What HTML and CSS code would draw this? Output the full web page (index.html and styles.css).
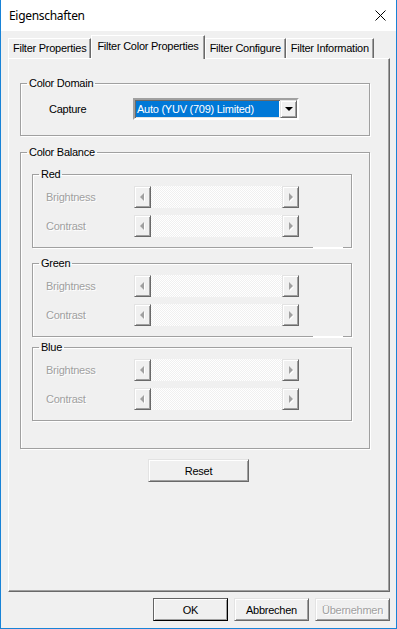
FILE: index.html
```html
<!DOCTYPE html>
<html lang="de">
<head>
    <meta charset="UTF-8">
    <meta name="viewport" content="width=device-width, initial-scale=1.0">
    <title>Eigenschaften</title>
    <link rel="stylesheet" href="styles.css">
</head>
<body>

    <div class="window">
        <div class="titlebar">
            <span class="title">Eigenschaften</span>
            <svg class="close" width="11" height="11" viewBox="0 0 11 11">
                <path d="M0.5 0.5 L10.5 10.5 M10.5 0.5 L0.5 10.5" stroke="#000" stroke-width="1" fill="none"/>
            </svg>
        </div>

        <div class="content">
            <div class="tabs">
                <div class="tab">Filter Properties</div>
                <div class="tab active">Filter Color Properties</div>
                <div class="tab">Filter Configure</div>
                <div class="tab">Filter Information</div>
            </div>

            <div class="panel">
                <fieldset class="group">
                    <legend>Color Domain</legend>
                    <div class="domain-body">
                        <div class="row">
                            <span class="label capture">Capture</span>
                            <div class="combo">
                                <span class="combo-value">Auto (YUV (709) Limited)</span>
                                <span class="combo-btn"><span class="down"></span></span>
                            </div>
                        </div>
                    </div>
                </fieldset>

                <fieldset class="group balance">
                    <legend>Color Balance</legend>
                    <div class="balance-body">
                        <fieldset class="group channel">
                            <legend>Red</legend>
                            <div class="channel-body">
                                <div class="row">
                                    <span class="label disabled">Brightness</span>
                                    <div class="scroll"><span class="arrow left"></span><span class="track"></span><span class="arrow right"></span></div>
                                </div>
                                <div class="row">
                                    <span class="label disabled">Contrast</span>
                                    <div class="scroll"><span class="arrow left"></span><span class="track"></span><span class="arrow right"></span></div>
                                </div>
                            </div>
                            <span class="line-gap"></span>
                        </fieldset>

                        <fieldset class="group channel green">
                            <legend>Green</legend>
                            <div class="channel-body">
                                <div class="row">
                                    <span class="label disabled">Brightness</span>
                                    <div class="scroll"><span class="arrow left"></span><span class="track"></span><span class="arrow right"></span></div>
                                </div>
                                <div class="row">
                                    <span class="label disabled">Contrast</span>
                                    <div class="scroll"><span class="arrow left"></span><span class="track"></span><span class="arrow right"></span></div>
                                </div>
                            </div>
                            <span class="line-gap"></span>
                        </fieldset>

                        <fieldset class="group channel blue">
                            <legend>Blue</legend>
                            <div class="channel-body">
                                <div class="row">
                                    <span class="label disabled">Brightness</span>
                                    <div class="scroll"><span class="arrow left"></span><span class="track"></span><span class="arrow right"></span></div>
                                </div>
                                <div class="row">
                                    <span class="label disabled">Contrast</span>
                                    <div class="scroll"><span class="arrow left"></span><span class="track"></span><span class="arrow right"></span></div>
                                </div>
                            </div>
                        </fieldset>
                    </div>
                </fieldset>

                <button class="btn reset">Reset</button>
            </div>

            <div class="footer">
                <button class="btn default">OK</button>
                <button class="btn">Abbrechen</button>
                <button class="btn disabled">Übernehmen</button>
            </div>
        </div>
    </div>

</body>
</html>
```

FILE: styles.css
```css
body {
    margin: 0;
    font-family: "Liberation Sans", Arial, sans-serif;
    font-size: 11px;
    letter-spacing: -0.25px;
    color: #000;
}
.window {
    width: 397px;
    height: 629px;
    box-sizing: border-box;
    border: 1px solid #1883d7;
    border-top: 0;
    background: #f0f0f0;
    display: flex;
    flex-direction: column;
}
.titlebar {
    height: 31px;
    flex: none;
    background: #fff;
    display: flex;
    align-items: center;
    justify-content: space-between;
    padding: 0 10px 0 8px;
}
.title {
    font-family: "Noto Sans", sans-serif;
    font-size: 12px;
    letter-spacing: -0.3px;
}
.close {
    display: block;
}
.content {
    flex: 1;
    display: flex;
    flex-direction: column;
    padding: 4px 6px 0 7px;
}

/* tabs */
.tabs {
    display: flex;
    align-items: flex-end;
    height: 23px;
    position: relative;
    z-index: 1;
}
.tab {
    height: 20px;
    box-sizing: border-box;
    padding: 0 4px;
    line-height: 19px;
    border: 1px solid;
    border-color: #fff #696969 transparent #fff;
    border-bottom: 0;
    box-shadow: inset -1px 0 #a0a0a0;
    white-space: nowrap;
}
.tab.active {
    height: 24px;
    margin-bottom: -1px;
    padding: 0 5px;
    line-height: 20px;
    background: #f0f0f0;
}

/* page */
.panel {
    flex: 1;
    display: flex;
    flex-direction: column;
    align-items: flex-start;
    border: 1px solid;
    border-color: #fff #696969 #696969 #fff;
    box-shadow: inset -1px -1px #a0a0a0;
    padding: 18px 19px 0 11px;
}
.group {
    margin: 0;
    padding: 0;
    width: 350px;
    box-sizing: border-box;
    border: 1px solid #a0a0a0;
    box-shadow: inset 1px 1px #fff, 1px 1px #fff;
    min-width: 0;
}
.group legend {
    margin-left: 6px;
    padding: 0 2px;
    line-height: 13px;
}
.domain-body {
    padding: 8px 0 15px 28px;
}
.row {
    display: flex;
    align-items: center;
    height: 22px;
}
.label {
    width: 88px;
    flex: none;
}
.label.capture {
    width: 84px;
}
.disabled {
    color: #a0a0a0;
    text-shadow: 1px 1px 0 #fff;
}

/* combo box */
.combo {
    width: 166px;
    height: 22px;
    box-sizing: border-box;
    display: flex;
    border: 2px solid;
    border-color: #a0a0a0 #fff #fff #a0a0a0;
    box-shadow: inset 1px 1px #696969, inset -1px -1px #e3e3e3;
    background: #fff;
    padding: 1px 0 1px 1px;
}
.combo-value {
    flex: 1;
    background: #0078d7;
    color: #fff;
    padding-left: 1px;
    line-height: 16px;
    white-space: nowrap;
    overflow: hidden;
}
.combo-btn {
    width: 17px;
    margin: -1px 0 -1px 1px;
    box-sizing: border-box;
    background: #f0f0f0;
    border: 1px solid;
    border-color: #e3e3e3 #696969 #696969 #e3e3e3;
    box-shadow: inset 1px 1px #fff, inset -1px -1px #a0a0a0;
    display: flex;
    align-items: center;
    justify-content: center;
}
.down {
    width: 0;
    height: 0;
    border-style: solid;
    border-width: 4px 4px 0 4px;
    border-color: #000 transparent transparent transparent;
}

.balance {
    margin-top: 10px;
}
.balance-body {
    padding: 9px 0 27px 11px;
}
.channel {
    width: 320px;
    position: relative;
}
.channel.green {
    margin-top: 9px;
}
.channel.blue {
    margin-top: 4px;
}
.channel-body {
    padding: 5px 0 10px 13px;
    display: flex;
    flex-direction: column;
    gap: 7px;
}
.line-gap {
    position: absolute;
    left: 280px;
    bottom: -1px;
    width: 30px;
    height: 1px;
    background: #fff;
}

/* disabled scrollbar */
.scroll {
    display: flex;
    width: 165px;
    height: 22px;
}
.track {
    flex: 1;
    background: repeating-conic-gradient(#f0f0f0 0 25%, #fff 0 50%) 0 0 / 2px 2px;
}
.arrow {
    width: 17px;
    box-sizing: border-box;
    background: #f0f0f0;
    border: 1px solid;
    border-color: #e3e3e3 #696969 #696969 #e3e3e3;
    box-shadow: inset 1px 1px #fff, inset -1px -1px #a0a0a0;
    display: flex;
    align-items: center;
    justify-content: center;
}
.arrow::before {
    content: "";
    width: 0;
    height: 0;
    border-style: solid;
    filter: drop-shadow(1px 1px 0 #fff);
}
.arrow.left::before {
    border-width: 4px 4px 4px 0;
    border-color: transparent #a0a0a0 transparent transparent;
    margin-right: 2px;
}
.arrow.right::before {
    border-width: 4px 0 4px 4px;
    border-color: transparent transparent transparent #a0a0a0;
    margin-left: 1px;
}

/* buttons */
.btn {
    width: 75px;
    height: 23px;
    padding: 0;
    font-family: inherit;
    font-size: 11px;
    letter-spacing: -0.25px;
    color: #000;
    background: #f0f0f0;
    border: 1px solid;
    border-color: #e3e3e3 #696969 #696969 #e3e3e3;
    box-shadow: inset 1px 1px #fff, inset -1px -1px #a0a0a0;
}
.btn.disabled {
    color: #a0a0a0;
    text-shadow: 1px 1px 0 #fff;
}
.btn.default {
    border-color: #646464 #000 #000 #646464;
}
.reset {
    width: 101px;
    margin: 10px 0 0 128px;
}
.footer {
    display: flex;
    justify-content: flex-end;
    gap: 6px;
    padding: 6px 0 7px;
}
```
